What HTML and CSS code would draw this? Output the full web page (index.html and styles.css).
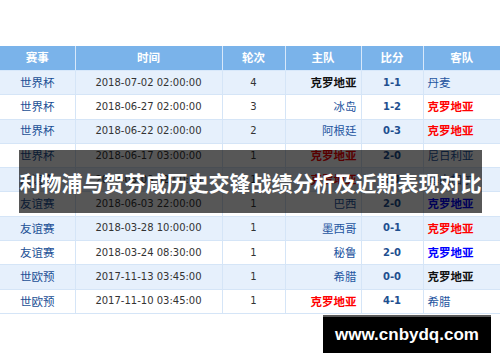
FILE: index.html
```html
<!DOCTYPE html>
<html lang="zh-CN">
<head>
<meta charset="utf-8">
<title>克罗地亚 历史交锋</title>
<link rel="stylesheet" href="styles.css">
</head>
<body>
<div class="page">
  <table class="matches">
    <colgroup>
      <col class="c1"><col class="c2"><col class="c3"><col class="c4"><col class="c5"><col class="c6">
    </colgroup>
    <thead>
      <tr><th>赛事</th><th>时间</th><th>轮次</th><th>主队</th><th>比分</th><th>客队</th></tr>
    </thead>
    <tbody>
      <tr class="alt"><td class="lg">世界杯</td><td class="dt">2018-07-02 02:00:00</td><td class="rd">4</td><td class="home"><span class="t-black">克罗地亚</span></td><td class="sc">1-1</td><td class="away"><span class="t-blue">丹麦</span></td></tr>
      <tr><td class="lg">世界杯</td><td class="dt">2018-06-27 02:00:00</td><td class="rd">3</td><td class="home"><span class="t-blue">冰岛</span></td><td class="sc">1-2</td><td class="away"><span class="t-red">克罗地亚</span></td></tr>
      <tr class="alt"><td class="lg">世界杯</td><td class="dt">2018-06-22 02:00:00</td><td class="rd">2</td><td class="home"><span class="t-blue">阿根廷</span></td><td class="sc">0-3</td><td class="away"><span class="t-red">克罗地亚</span></td></tr>
      <tr><td class="lg">世界杯</td><td class="dt">2018-06-17 03:00:00</td><td class="rd">1</td><td class="home"><span class="t-red">克罗地亚</span></td><td class="sc">2-0</td><td class="away"><span class="t-blue">尼日利亚</span></td></tr>
      <tr class="alt"><td class="lg">友谊赛</td><td class="dt">2018-06-09 02:00:00</td><td class="rd">1</td><td class="home"><span class="t-red">克罗地亚</span></td><td class="sc">2-1</td><td class="away"><span class="t-blue">塞内加尔</span></td></tr>
      <tr><td class="lg">友谊赛</td><td class="dt">2018-06-03 22:00:00</td><td class="rd">1</td><td class="home"><span class="t-blue">巴西</span></td><td class="sc">2-0</td><td class="away"><span class="t-bright">克罗地亚</span></td></tr>
      <tr class="alt"><td class="lg">友谊赛</td><td class="dt">2018-03-28 10:00:00</td><td class="rd">1</td><td class="home"><span class="t-blue">墨西哥</span></td><td class="sc">0-1</td><td class="away"><span class="t-red">克罗地亚</span></td></tr>
      <tr><td class="lg">友谊赛</td><td class="dt">2018-03-24 08:30:00</td><td class="rd">1</td><td class="home"><span class="t-blue">秘鲁</span></td><td class="sc">2-0</td><td class="away"><span class="t-bright">克罗地亚</span></td></tr>
      <tr class="alt"><td class="lg">世欧预</td><td class="dt">2017-11-13 03:45:00</td><td class="rd">1</td><td class="home"><span class="t-blue">希腊</span></td><td class="sc">0-0</td><td class="away"><span class="t-black">克罗地亚</span></td></tr>
      <tr><td class="lg">世欧预</td><td class="dt">2017-11-10 03:45:00</td><td class="rd">1</td><td class="home"><span class="t-red">克罗地亚</span></td><td class="sc">4-1</td><td class="away"><span class="t-blue">希腊</span></td></tr>
    </tbody>
  </table>

  <div class="banner"><span>利物浦与贺芬咸历史交锋战绩分析及近期表现对比</span></div>
  <div class="site-badge">www.cnbydq.com</div>
</div>
</body>
</html>
```
FILE: styles.css
```css
html, body {
  margin: 0;
  padding: 0;
  background: #ffffff;
}

.page {
  position: relative;
  width: 500px;
  height: 362px;
  padding-top: 46px;
  box-sizing: border-box;
  overflow: hidden;
  font-family: "Noto Sans CJK SC", "DejaVu Sans", sans-serif;
}

.matches {
  width: 500px;
  border-collapse: collapse;
  table-layout: fixed;
}

.c1 { width: 75px; }
.c2 { width: 147px; }
.c3 { width: 63px; }
.c4 { width: 76px; }
.c5 { width: 62px; }
.c6 { width: 77px; }

.matches th {
  height: 24px;
  padding: 0;
  background: #7ab3ea;
  color: #ffffff;
  font-size: 11.5px;
  font-weight: bold;
  text-align: center;
  border-right: 1px solid #d8e8fa;
  border-bottom: 1px solid #d8e8fa;
  line-height: 1;
}

.matches th:last-child { border-right: none; }

.matches td {
  height: 23.3px;
  padding: 0 4px;
  border-right: 1px solid #d5e5f7;
  border-bottom: 1px solid #d5e5f7;
  font-size: 11.5px;
  line-height: 1;
  text-align: center;
  white-space: nowrap;
  overflow: hidden;
  background: #ffffff;
}

.matches td:last-child { border-right: none; }

.matches tr.alt td { background: #e6f0fc; }

.lg { color: #1b4f95; }

.dt {
  font-family: "DejaVu Sans", sans-serif;
  font-size: 10px !important;
  color: #333333;
}

.rd {
  font-family: "DejaVu Sans", sans-serif;
  font-size: 10px !important;
  color: #333333;
}

.sc {
  font-family: "DejaVu Sans", sans-serif;
  font-size: 10px !important;
  font-weight: bold;
  color: #1e4f8f;
}

.matches td.home { text-align: right; }
.matches td.away { text-align: left; }

.t-blue { color: #1e55a0; }
.t-black { color: #111111; font-weight: bold; }
.t-red { color: #ff0000; font-weight: bold; }
.t-bright { color: #0000ff; font-weight: bold; }

.banner {
  position: absolute;
  left: 19px;
  top: 150px;
  width: 463px;
  height: 63px;
  background: rgba(0, 0, 0, 0.66);
  display: flex;
  align-items: center;
  justify-content: center;
}

.banner span {
  color: #ffffff;
  font-family: "Noto Sans CJK SC", sans-serif;
  font-weight: bold;
  font-size: 21px;
  letter-spacing: 0;
  white-space: nowrap;
}

.site-badge {
  position: absolute;
  left: 323px;
  top: 315px;
  width: 168px;
  height: 36px;
  background: #000000;
  border-top: 2px solid #5a5a5a;
  color: #ffffff;
  font-family: "Liberation Sans", Arial, sans-serif;
  font-weight: bold;
  font-size: 17px;
  display: flex;
  align-items: center;
  justify-content: center;
}
```
